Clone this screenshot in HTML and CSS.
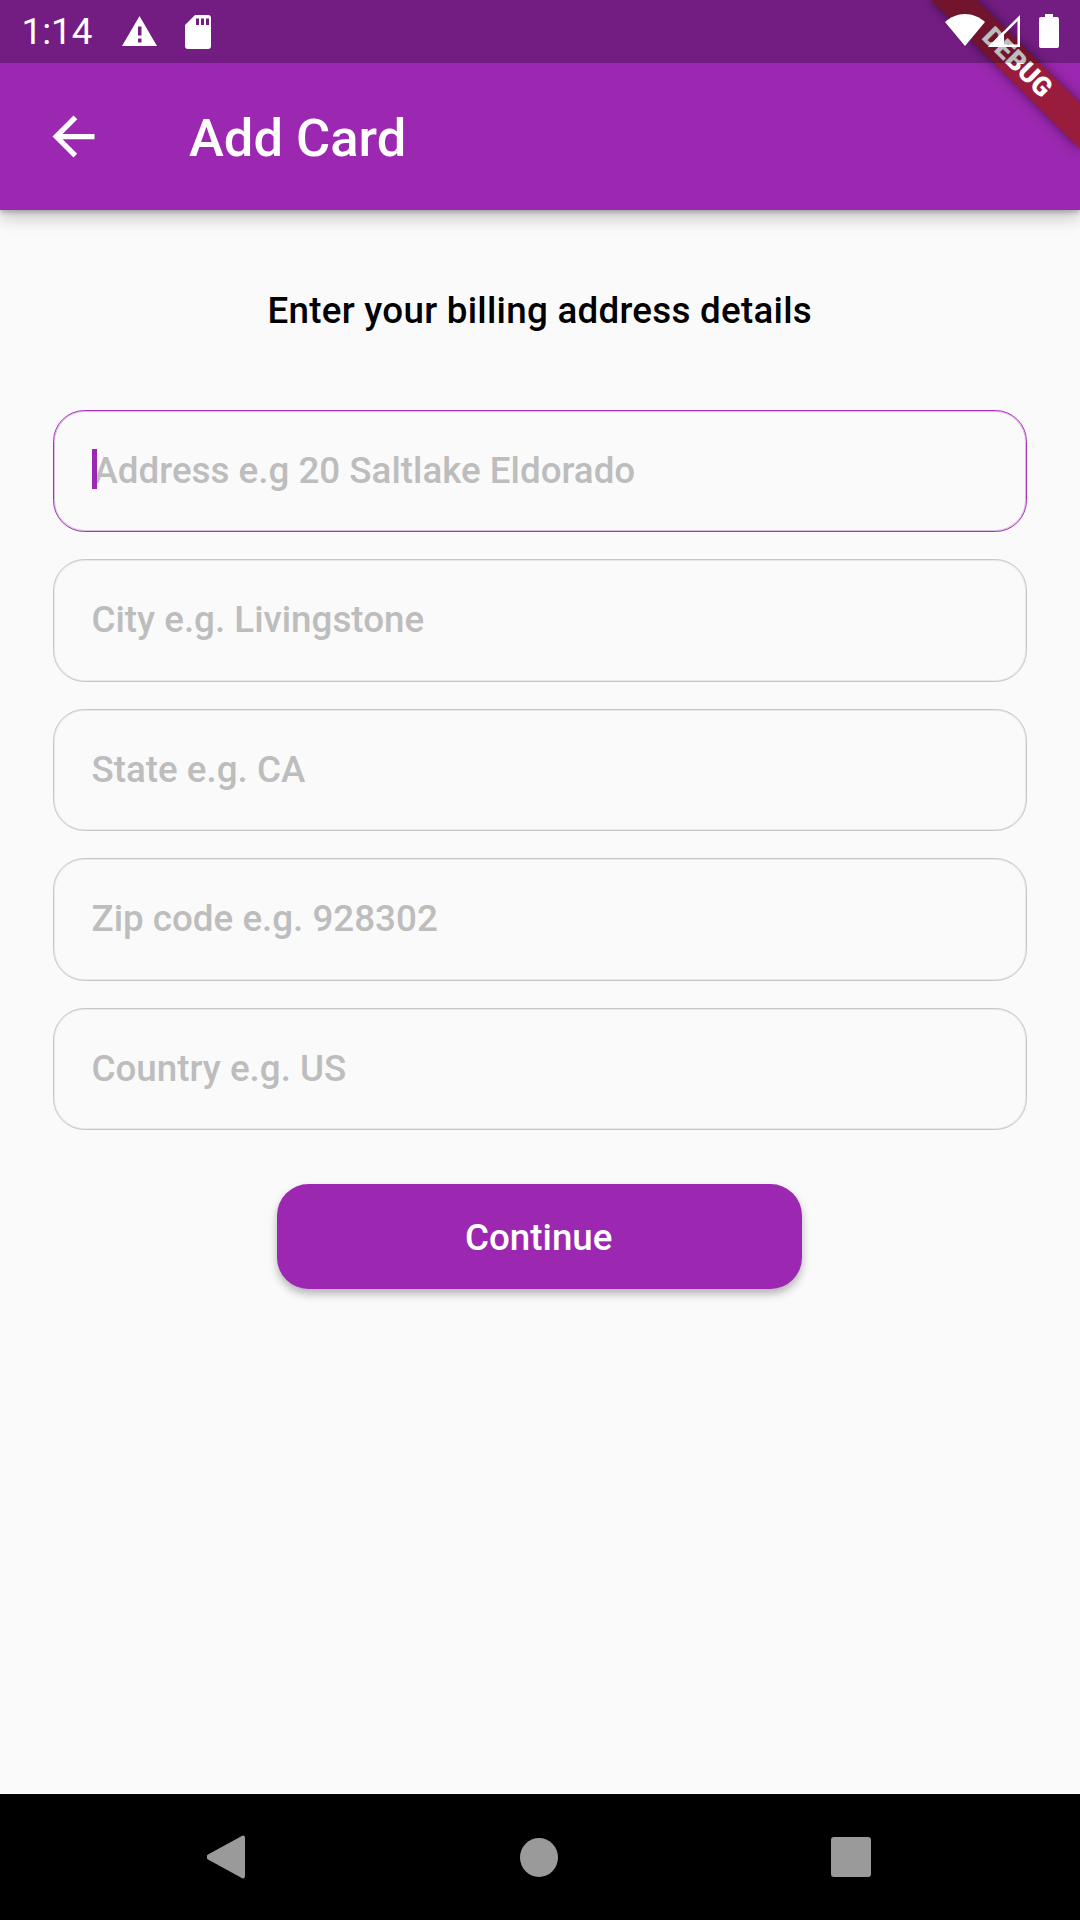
FILE: index.html
```html
<!DOCTYPE html>
<html lang="en">
<head>
<meta charset="utf-8">
<title>Add Card</title>
<link rel="stylesheet" href="styles.css">
</head>
<body>
<div class="screen">
  <main class="app">
    <header class="appbar">
      <svg class="back" viewBox="0 0 48 48" aria-hidden="true"><path d="M40 22H15.7l11.2-11.2L24 8 8 24l16 16 2.8-2.8L15.7 26H40z"/></svg>
      <h1 class="title">Add Card</h1>
    </header>
    <section class="content">
      <h2 class="heading">Enter your billing address details</h2>
      <form class="form">
        <div class="field field-focus"><span class="caret"></span><span class="hint hint-focus">Address e.g 20 Saltlake Eldorado</span></div>
        <div class="field"><span class="hint">City e.g. Livingstone</span></div>
        <div class="field"><span class="hint">State e.g. CA</span></div>
        <div class="field"><span class="hint">Zip code e.g. 928302</span></div>
        <div class="field"><span class="hint">Country e.g. US</span></div>
      </form>
      <div class="actions"><button class="continue" type="button">Continue</button></div>
    </section>
  </main>
  <div class="banner"><span class="banner-text">DEBUG</span></div>
  <div class="statusbar">
    <div class="status-left">
      <span class="time">1:14</span>
      <svg class="ic-warn" viewBox="0 0 35 30" aria-hidden="true"><path fill-rule="evenodd" d="M17.5 0 35 30H0zM16 10.500v9h3.500v-9zM16 22.500v4h3.500v-4z"/></svg>
      <svg class="ic-sd" viewBox="0 0 26 34" aria-hidden="true"><path fill-rule="evenodd" d="M10 0h13a3 3 0 0 1 3 3v28a3 3 0 0 1-3 3H3a3 3 0 0 1-3-3V10zM11 3.500v6.500h3V3.500zM16 3.500v6.500h3V3.500zM21 3.500v6.500h3V3.500z"/></svg>
    </div>
    <div class="status-right">
      <svg class="ic-wifi" viewBox="0 0 40 32" aria-hidden="true"><path d="M20 32 0 8C5.500 3 12.500 0 20 0s14.500 3 20 8z"/></svg>
      <svg class="ic-signal" viewBox="0 0 32 32" aria-hidden="true"><path fill-rule="evenodd" d="M32 0v32H0zM29.500 6 6 29.500h23.500z"/><path d="M0 32 16 16v16z"/></svg>
      <svg class="ic-batt" viewBox="0 0 20 34" aria-hidden="true"><path d="M6 0h8v3h4a2 2 0 0 1 2 2v27a2 2 0 0 1-2 2H2a2 2 0 0 1-2-2V5a2 2 0 0 1 2-2h4z"/></svg>
    </div>
  </div>
  <nav class="navbar">
    <svg class="nav-back" viewBox="0 0 38 44" aria-hidden="true"><path d="M36 0.500a2 2 0 0 1 2 2v39a2 2 0 0 1-3.200 1.500L1 24.500a3 3 0 0 1 0-5L34.800 1a2 2 0 0 1 1.200-.5z"/></svg>
    <span class="nav-home"></span>
    <span class="nav-recent"></span>
  </nav>
</div>
</body>
</html>
```
FILE: styles.css
```css
* { box-sizing: border-box; }
html, body { margin: 0; padding: 0; }
body { width: 1080px; height: 1920px; overflow: hidden; font-family: Roboto, "Liberation Sans", sans-serif; background: #fafafa; }
.screen { position: relative; width: 1080px; height: 1920px; overflow: hidden; display: flex; flex-direction: column; }
.app { flex: 1; display: flex; flex-direction: column; background: #fafafa; }
.appbar { height: 210px; padding: 63px 0 0 42px; display: flex; align-items: center; background: #9c27b0; box-shadow: 0 2px 5px rgba(0,0,0,.24), 0 8px 16px rgba(0,0,0,.2); color: #fff; }
.back { width: 63px; height: 63px; fill: #fff; flex: none; }
.title { margin: 4px 0 0 84px; font-size: 52.5px; font-weight: 500; line-height: 1; }
.content { flex: 1; padding: 0 53px 0 52.5px; }
.heading { margin: 80px 0 0; text-align: center; font-size: 36.75px; line-height: 42px; font-weight: 500; letter-spacing: .26px; color: #000; }
.form { margin-top: 77.5px; display: flex; flex-direction: column; gap: 27px; }
.field { height: 122.5px; position: relative; display: flex; align-items: center; padding: 0 38px; border: 1px solid #c6c6c6; box-shadow: inset 0 0 0 1px rgba(190,190,190,.28); border-radius: 31.5px; }
.field-focus { border-color: #a534b9; box-shadow: inset 0 0 0 1px rgba(156,39,176,.3); }
.hint { font-size: 36.75px; font-weight: 500; color: #bdbdbd; line-height: 42px; white-space: nowrap; }
.hint-focus { margin-left: 2px; }
.caret { position: absolute; left: 38px; top: 38px; width: 5px; height: 40px; background: #9c27b0; }
.actions { margin-top: 53.5px; display: flex; justify-content: center; }
.continue { width: 525px; height: 105px; border: 0; border-radius: 31.5px; background: #9c27b0; color: #fff; font: 500 36.75px Roboto, "Liberation Sans", sans-serif; box-shadow: 0 5px 8px rgba(0,0,0,.28); padding: 2px 2px 0 0; }
.banner { position: absolute; top: 47.25px; right: -42px; width: 210px; height: 31.5px; background: #991c3c; transform: rotate(45deg); box-shadow: 0 0 12px rgba(0,0,0,.5); display: flex; align-items: center; justify-content: center; }
.banner-text { font-size: 26.8px; font-weight: 900; line-height: 1; color: #fff; }
.statusbar { position: absolute; top: 0; left: 0; width: 1080px; height: 63px; background: rgba(0,0,0,.26); display: flex; justify-content: space-between; align-items: flex-start; padding: 0 21px 0 21.5px; color: #fff; }
.status-left, .status-right { display: flex; align-items: flex-start; }
.time { font-size: 36.75px; line-height: 63px; font-weight: 400; width: 100.5px; }
.ic-warn { width: 35px; height: 30px; margin-top: 16px; fill: #fff; }
.ic-sd { width: 26px; height: 34px; margin: 15px 0 0 28px; fill: #fff; }
.ic-wifi { width: 40px; height: 32px; margin-top: 14px; fill: #fff; }
.ic-signal { width: 32px; height: 32px; margin: 15px 0 0 3px; fill: #fff; }
.ic-batt { width: 20px; height: 34px; margin: 14px 0 0 19px; fill: #fff; }
.navbar { height: 126px; background: #000; display: flex; justify-content: space-between; align-items: center; padding: 0 209px 0 207px; }
.nav-back { width: 38px; height: 44px; margin-right: 2px; fill: #9a9a9a; }
.nav-home { width: 38px; height: 39px; border-radius: 50%; background: #9a9a9a; }
.nav-recent { width: 40px; height: 40px; border-radius: 3px; background: #9a9a9a; }
```
